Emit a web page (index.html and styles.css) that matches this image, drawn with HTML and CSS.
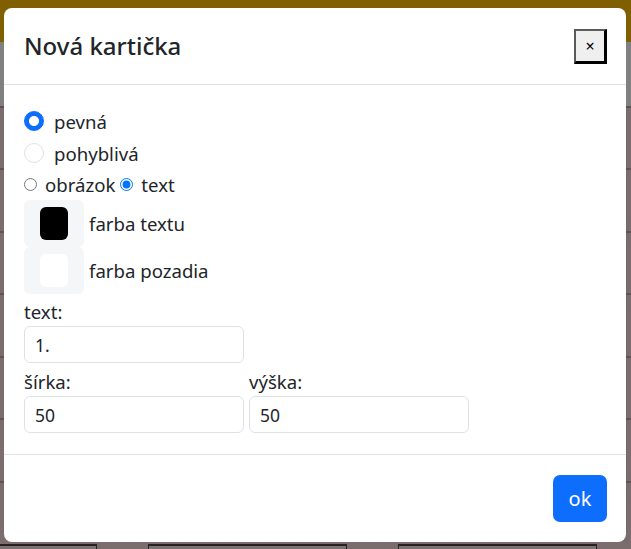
FILE: index.html
```html
<!DOCTYPE html>
<html lang="sk">
<head>
<meta charset="utf-8">
<title>Nová kartička</title>
<link rel="stylesheet" href="styles.css">
</head>
<body>
<div class="page">
  <div class="topbar"></div>
  <div class="navbar"></div>
  <div class="main"></div>
  <div class="boxes">
    <div class="box"></div>
    <div class="box"></div>
    <div class="box"></div>
    <div class="box"></div>
  </div>
</div>

<div class="modal">
  <div class="modal-header">
    <h4 class="modal-title">Nová kartička</h4>
    <button class="close" type="button">×</button>
  </div>
  <div class="modal-body">
    <label class="check"><span class="radio radio-checked"></span>pevná</label>
    <label class="check"><span class="radio"></span>pohyblivá</label>
    <div class="type-row">
      <input class="native-radio" type="radio" name="typ"><span class="type-label">obrázok</span><input class="native-radio" type="radio" name="typ" checked><span class="type-label">text</span>
    </div>
    <div class="color-row"><span class="swatch"><span class="swatch-fill fill-black"></span></span><span class="color-label">farba textu</span></div>
    <div class="color-row"><span class="swatch"><span class="swatch-fill fill-white"></span></span><span class="color-label">farba pozadia</span></div>
    <label class="field-label">text:</label>
    <input class="input" type="text" value="1.">
    <div class="dims">
      <div class="dim">
        <label class="field-label">šírka:</label>
        <input class="input" type="text" value="50">
      </div>
      <div class="dim">
        <label class="field-label">výška:</label>
        <input class="input" type="text" value="50">
      </div>
    </div>
  </div>
  <div class="modal-footer">
    <button class="btn-ok" type="button">ok</button>
  </div>
</div>
</body>
</html>
```

FILE: styles.css
```css
* { box-sizing: border-box; }

html, body {
  margin: 0;
  padding: 0;
}

body {
  width: 631px;
  height: 549px;
  overflow: hidden;
  font-family: "Noto Sans", "Open Sans", sans-serif;
  color: #212529;
}

/* darkened page behind the modal */
.page {
  height: 549px;
  display: flex;
  flex-direction: column;
  background: #7b6d6d;
  overflow: hidden;
}

.topbar {
  height: 42px;
  background: #7f5f00;
}

.navbar {
  height: 66px;
  background: #808080;
  border-bottom: 2px solid #5c5252;
}

.main {
  height: 436px;
  background:
    repeating-linear-gradient(to bottom, transparent 0, transparent 60.5px, #5f5454 60.5px, #5f5454 62.5px),
    repeating-linear-gradient(to right, #7b6d6d 0, #7b6d6d 18px, #776969 18px, #776969 19px);
}

.boxes {
  display: flex;
  gap: 51px;
  padding-left: 0;
  background: #7b6d6d;
  flex: 1;
  overflow: hidden;
}

.box {
  width: 199px;
  flex: none;
  border-top: 2px solid #262222;
  border-left: 1px solid #262222;
  border-right: 1px solid #262222;
  background: #7a7272;
}

.box:first-child {
  width: 97px;
  border-left: none;
}

/* modal */
.modal {
  position: absolute;
  top: 8px;
  left: 4px;
  width: 622px;
  height: 534px;
  background: #fff;
  border-radius: 8px;
  display: flex;
  flex-direction: column;
}

.modal-header {
  height: 79px;
  padding: 16px 19px 16px 20px;
  display: flex;
  align-items: center;
  justify-content: space-between;
  border-bottom: 1px solid #dee2e6;
}

.modal-title {
  margin: 0;
  font-size: 24px;
  font-weight: 500;
  line-height: 1.5;
}

.close {
  width: 33px;
  height: 35px;
  padding: 0;
  background: #efefef;
  border-style: solid;
  border-width: 2px 3px 3px 2px;
  border-color: #5a5a5a #000 #000 #5a5a5a;
  font-family: "Noto Sans", sans-serif;
  font-size: 16px;
  line-height: 1;
  color: #000;
}

.modal-body {
  padding: 20px 20px 0;
  flex: 1;
}

.check {
  display: flex;
  align-items: center;
  height: 32px;
  font-size: 18.6px;
}

.radio {
  width: 20px;
  height: 20px;
  border-radius: 50%;
  border: 1px solid #dee2e6;
  background: #fff;
  margin-right: 10px;
  flex: none;
}

.radio-checked {
  border-color: #0d6efd;
  background: radial-gradient(circle, #fff 0, #fff 4.6px, #0d6efd 5.4px);
}

.type-row {
  display: flex;
  align-items: center;
  height: 31px;
  font-size: 18.6px;
}

.native-radio {
  width: 13px;
  height: 13px;
  margin: 0;
  flex: none;
}

.type-label {
  margin-left: 8px;
  margin-right: 5px;
}

.color-row {
  display: flex;
  align-items: center;
  height: 47px;
  font-size: 18.6px;
}

.swatch {
  width: 60px;
  height: 47px;
  padding: 7px 16px;
  background: #f5f6f8;
  border-radius: 6px;
  margin-right: 5px;
  flex: none;
  display: flex;
}

.swatch-fill {
  flex: 1;
  border-radius: 6px;
}

.fill-black { background: #000; }
.fill-white { background: #fff; }

.field-label {
  display: block;
  font-size: 18.6px;
  line-height: 27px;
  margin-top: 4px;
  margin-bottom: 1px;
}

.input {
  display: block;
  width: 220px;
  height: 37px;
  padding: 0 10px;
  border: 1px solid #dee2e6;
  border-radius: 6px;
  font-family: "Noto Sans", sans-serif;
  font-size: 17.5px;
  color: #212529;
  background: #fff;
}

.dims {
  display: flex;
  gap: 5px;
  margin-top: 1px;
}

.modal-footer {
  border-top: 1px solid #dee2e6;
  padding: 20px 19px 20px;
  display: flex;
  justify-content: flex-end;
  margin-top: 21px;
}

.btn-ok {
  width: 54px;
  height: 47px;
  border: none;
  border-radius: 7px;
  background: #0d6efd;
  color: #fff;
  font-family: "Noto Sans", sans-serif;
  font-size: 20px;
  padding: 0;
}
```
